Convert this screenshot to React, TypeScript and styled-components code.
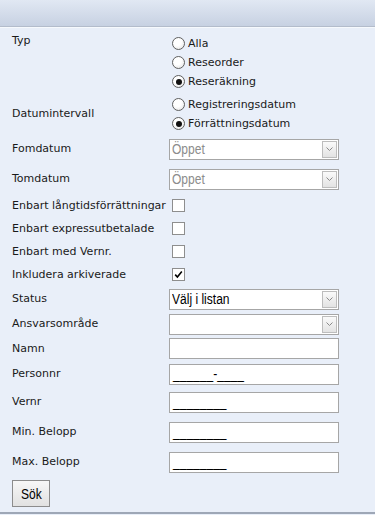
import React from 'react';
import styled, { createGlobalStyle } from 'styled-components';

const GlobalStyle = createGlobalStyle`
  body {
    margin: 0;
    background: #e9eff9;
    font-family: "DejaVu Sans", Verdana, sans-serif;
    font-size: 11px;
    color: #1a1a1a;
  }
`;

const Page = styled.div`
  width: 375px;
  background: #e9eff9;
  border-bottom: 2px solid #9ea7b6;
`;

const TitleBar = styled.div`
  height: 26px;
  background: linear-gradient(#e1e8f3, #c7d1e2);
  border-bottom: 1px solid #b3bccb;
  box-shadow: 0 1px 0 #f6f9fd;
`;

const Form = styled.div`
  display: flex;
  flex-direction: column;
  padding: 7px 0 5px 12px;
`;

const Row = styled.div<{ $height?: number; $top?: boolean; $gap?: number }>`
  display: grid;
  grid-template-columns: 157px 1fr;
  align-items: ${({ $top }) => ($top ? 'start' : 'center')};
  height: ${({ $height }) => ($height ? `${$height}px` : 'auto')};
  margin-top: ${({ $gap }) => $gap ?? 0}px;
`;

const Label = styled.div`
  line-height: 14px;
  white-space: nowrap;
`;

const RadioGroup = styled.div`
  display: flex;
  flex-direction: column;
  padding-left: 3px;
`;

const RadioItem = styled.label`
  display: flex;
  align-items: center;
  height: 19px;
  gap: 3px;
`;

const RadioDot = styled.span<{ $checked?: boolean }>`
  position: relative;
  width: 11px;
  height: 11px;
  border-radius: 50%;
  border: 1px solid #5f5f5f;
  background: radial-gradient(circle at 40% 35%, #ffffff 40%, #dedede 100%);

  &::after {
    content: '';
    display: ${({ $checked }) => ($checked ? 'block' : 'none')};
    position: absolute;
    left: 2.5px;
    top: 2.5px;
    width: 6px;
    height: 6px;
    border-radius: 50%;
    background: #111;
  }
`;

const Box = styled.span`
  display: flex;
  align-items: center;
  justify-content: center;
  width: 11px;
  height: 11px;
  margin-left: 3px;
  border: 1px solid #8e8e8e;
  background: #fff;
`;

// the screenshot's field font is a narrow sans; squeeze Liberation Sans to match
const Narrow = styled.span`
  display: inline-block;
  font-family: "Liberation Sans", Arial, sans-serif;
  font-size: 14px;
  white-space: nowrap;
  transform: scaleX(0.86);
  transform-origin: left center;
`;

const Select = styled.div<{ $muted?: boolean }>`
  display: flex;
  align-items: center;
  justify-content: space-between;
  box-sizing: border-box;
  width: 170px;
  height: 21px;
  padding: 0 1px 0 2px;
  border: 1px solid #a6a6a6;
  background: #fff;
  color: ${({ $muted }) => ($muted ? '#8c8c8c' : '#000')};
`;

const DropButton = styled.span`
  display: flex;
  align-items: center;
  justify-content: center;
  box-sizing: border-box;
  width: 15px;
  height: 17px;
  border: 1px solid #bdbdbd;
  background: linear-gradient(#fafafa, #e3e3e3);
`;

const TextBox = styled.div`
  display: flex;
  align-items: center;
  box-sizing: border-box;
  width: 170px;
  height: 21px;
  padding: 0 3px;
  border: 1px solid #a6a6a6;
  background: #fff;
  color: #000;
`;

const Button = styled.button`
  display: flex;
  align-items: center;
  justify-content: center;
  align-self: flex-start;
  box-sizing: border-box;
  width: 38px;
  height: 27px;
  margin-top: 3px;
  padding: 0 0 0 4px;
  border: 1px solid #8c8c8c;
  background: linear-gradient(#f7f7f7, #e1e1e1);
  color: #000;
`;

const Chevron = () => (
  <svg width="7" height="5" viewBox="0 0 7 5">
    <path d="M0.5 0.5 L3.5 3.5 L6.5 0.5" fill="none" stroke="#8a8a8a" strokeWidth="1" />
  </svg>
);

const Check = () => (
  <svg width="9" height="9" viewBox="0 0 9 9">
    <path d="M1.2 4.6 L3.4 7 L7.8 1.6" fill="none" stroke="#000" strokeWidth="1.6" />
  </svg>
);

const Radio: React.FC<{ label: string; checked?: boolean }> = ({ label, checked }) => (
  <RadioItem>
    <RadioDot $checked={checked} />
    {label}
  </RadioItem>
);

const Dropdown: React.FC<{ value?: string; muted?: boolean }> = ({ value, muted }) => (
  <Select $muted={muted}>
    <Narrow>{value}</Narrow>
    <DropButton>
      <Chevron />
    </DropButton>
  </Select>
);

const checkRows = [
  { label: 'Enbart långtidsförrättningar', checked: false },
  { label: 'Enbart expressutbetalade', checked: false },
  { label: 'Enbart med Vernr.', checked: false },
  { label: 'Inkludera arkiverade', checked: true },
];

const App: React.FC = () => (
  <>
    <GlobalStyle />
    <Page>
      <TitleBar />
      <Form>
        <Row $top>
          <Label>Typ</Label>
          <RadioGroup>
            <Radio label="Alla" />
            <Radio label="Reseorder" />
            <Radio label="Reseräkning" checked />
          </RadioGroup>
        </Row>
        <Row $gap={4}>
          <Label>Datumintervall</Label>
          <RadioGroup>
            <Radio label="Registreringsdatum" />
            <Radio label="Förrättningsdatum" checked />
          </RadioGroup>
        </Row>
        <Row $height={30} $gap={1}>
          <Label>Fomdatum</Label>
          <Dropdown value="Öppet" muted />
        </Row>
        <Row $height={30}>
          <Label>Tomdatum</Label>
          <Dropdown value="Öppet" muted />
        </Row>
        {checkRows.map((row) => (
          <Row key={row.label} $height={23}>
            <Label>{row.label}</Label>
            <Box>{row.checked && <Check />}</Box>
          </Row>
        ))}
        <Row $height={26}>
          <Label>Status</Label>
          <Dropdown value="Välj i listan" />
        </Row>
        <Row $height={24}>
          <Label>Ansvarsområde</Label>
          <Dropdown />
        </Row>
        <Row $height={25}>
          <Label>Namn</Label>
          <TextBox />
        </Row>
        <Row $height={26}>
          <Label>Personnr</Label>
          <TextBox>
            <Narrow>______-____</Narrow>
          </TextBox>
        </Row>
        <Row $height={30}>
          <Label>Vernr</Label>
          <TextBox>
            <Narrow>________</Narrow>
          </TextBox>
        </Row>
        <Row $height={30}>
          <Label>Min. Belopp</Label>
          <TextBox>
            <Narrow>________</Narrow>
          </TextBox>
        </Row>
        <Row $height={30}>
          <Label>Max. Belopp</Label>
          <TextBox>
            <Narrow>________</Narrow>
          </TextBox>
        </Row>
        <Button>
          <Narrow>Sök</Narrow>
        </Button>
      </Form>
    </Page>
  </>
);

export default App;
